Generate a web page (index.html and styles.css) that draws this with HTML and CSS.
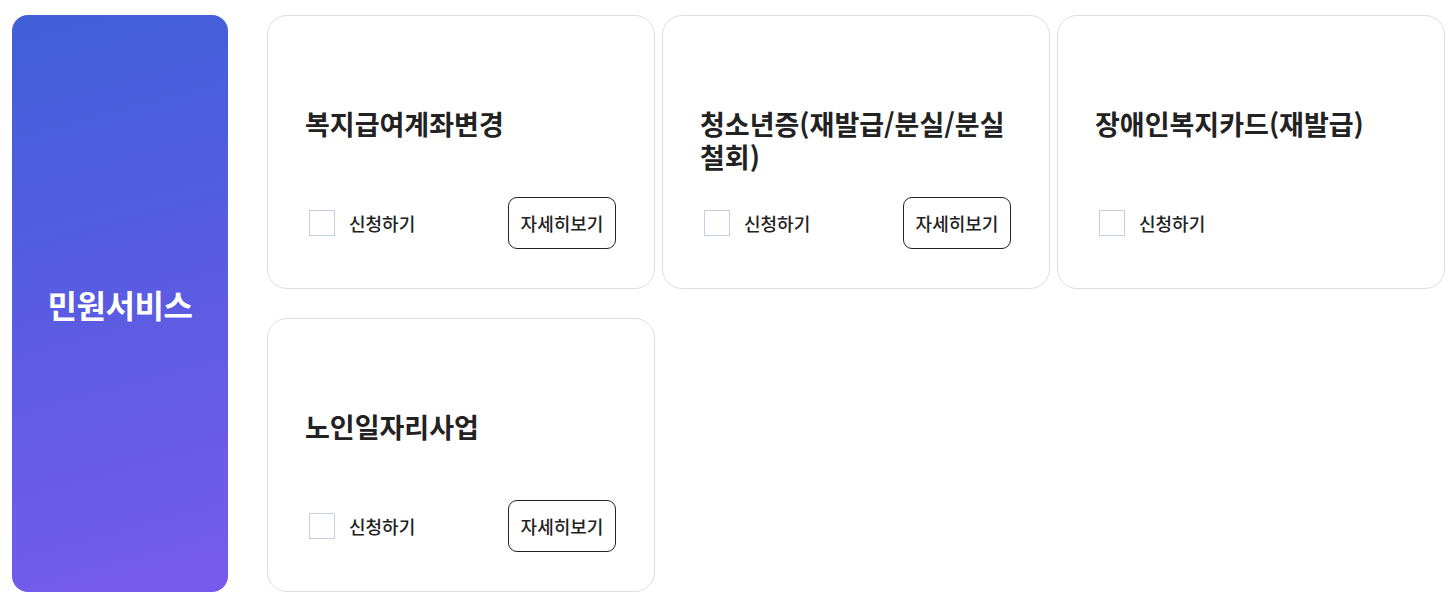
FILE: index.html
```html
<!DOCTYPE html>
<html lang="ko">

<head>
  <meta charset="UTF-8" />
  <meta name="viewport" content="width=device-width, initial-scale=1.0" />
  <title>민원서비스</title>
  <link rel="stylesheet" href="styles.css">
</head>

<body>
  <div class="service">
    <aside class="side-title">
      <h2>민원서비스</h2>
    </aside>

    <ul class="card-list">
      <li class="card">
        <h3>복지급여계좌변경</h3>
        <div class="card-foot">
          <label class="apply"><input type="checkbox" /><span class="box"></span>신청하기</label>
          <button type="button">자세히보기</button>
        </div>
      </li>
      <li class="card">
        <h3>청소년증(재발급/분실/분실 철회)</h3>
        <div class="card-foot">
          <label class="apply"><input type="checkbox" /><span class="box"></span>신청하기</label>
          <button type="button">자세히보기</button>
        </div>
      </li>
      <li class="card">
        <h3>장애인복지카드(재발급)</h3>
        <div class="card-foot">
          <label class="apply"><input type="checkbox" /><span class="box"></span>신청하기</label>
        </div>
      </li>
      <li class="card">
        <h3>노인일자리사업</h3>
        <div class="card-foot">
          <label class="apply"><input type="checkbox" /><span class="box"></span>신청하기</label>
          <button type="button">자세히보기</button>
        </div>
      </li>
    </ul>
  </div>
</body>

</html>
```

FILE: styles.css
```css
* {
  margin: 0;
  padding: 0;
  box-sizing: border-box;
}

body {
  font-family: 'Noto Sans CJK KR', 'Noto Sans', sans-serif;
  background: #fff;
  color: #222;
}

.service {
  display: flex;
  padding: 15px 8px 0 12px;
}

.side-title {
  flex: 0 0 216px;
  height: 577px;
  border-radius: 16px;
  background: linear-gradient(165deg, #405fd8 0%, #5a5ce2 50%, #785bee 100%);
  display: flex;
  align-items: center;
  justify-content: center;
}

.side-title h2 {
  color: #fff;
  font-size: 32px;
  font-weight: 700;
  letter-spacing: -0.4px;
}

.card-list {
  list-style: none;
  flex: 1;
  margin-left: 39px;
  display: grid;
  grid-template-columns: repeat(3, 1fr);
  grid-auto-rows: 274px;
  column-gap: 7px;
  row-gap: 29px;
}

.card {
  border: 1px solid #dedede;
  border-radius: 20px;
  padding: 91px 36px 39px 37px;
  display: flex;
  flex-direction: column;
}

.card h3 {
  font-size: 27px;
  font-weight: 700;
  line-height: 33px;
  color: #222;
}

.card-foot {
  margin-top: auto;
  height: 52px;
  display: flex;
  align-items: center;
  justify-content: space-between;
}

.apply {
  display: flex;
  align-items: center;
  font-size: 18px;
  font-weight: 500;
  color: #222;
  cursor: pointer;
}

.apply input {
  display: none;
}

.apply .box {
  width: 26px;
  height: 26px;
  border: 1px solid #c5cde2;
  margin: 0 14px 0 4px;
}

.card-foot button {
  width: 108px;
  height: 52px;
  margin-right: 2px;
  border: 1px solid #222;
  border-radius: 9px;
  background: #fff;
  font-family: inherit;
  font-size: 18px;
  font-weight: 500;
  color: #222;
  cursor: pointer;
}
```
